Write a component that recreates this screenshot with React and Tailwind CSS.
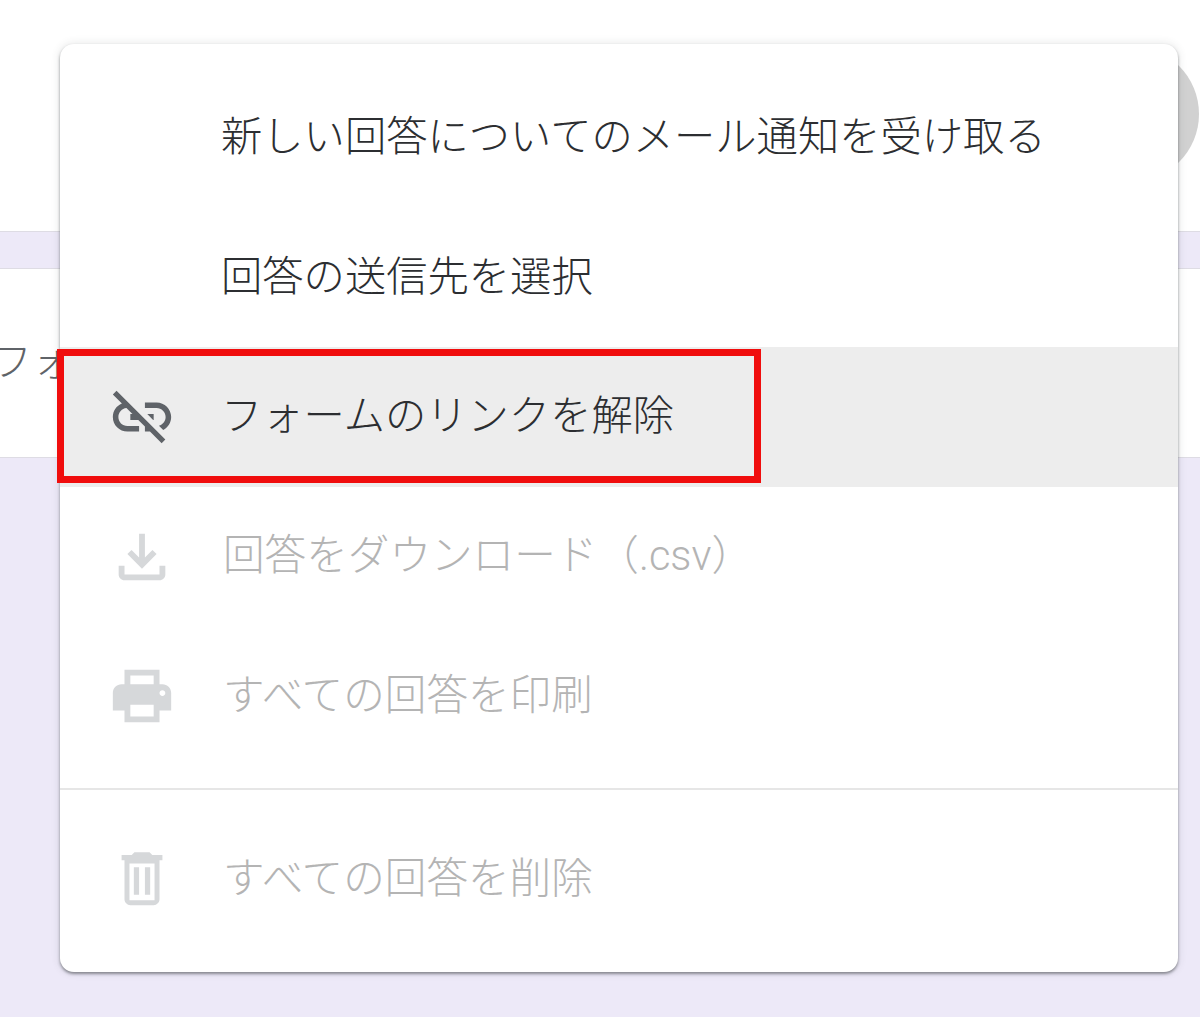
const items = [
  { label: "新しい回答についてのメール通知を受け取る" },
  { label: "回答の送信先を選択" },
  {
    label: "フォームのリンクを解除",
    active: true,
    icon: "M17 7h-4v1.9h4c1.71 0 3.1 1.39 3.1 3.1 0 1.43-.97 2.63-2.29 2.98l1.46 1.46C20.88 15.61 22 13.95 22 12c0-2.76-2.24-5-5-5zm-1 4h-2.19l2 2H16zM2 4.27l3.11 3.11C3.29 8.12 2 9.91 2 12c0 2.76 2.24 5 5 5h4v-1.9H7c-1.71 0-3.1-1.39-3.1-3.1 0-1.59 1.21-2.9 2.76-3.07L8.73 11H8v2h2.73L13 15.27V17h1.73l4.01 4L20 19.73 3.27 3 2 4.27z",
  },
  {
    label: "回答をダウンロード（.csv）",
    disabled: true,
    icon: "M18 15v3H6v-3H4v3c0 1.1.9 2 2 2h12c1.1 0 2-.9 2-2v-3h-2zm-1-4l-1.41-1.41L13 12.17V4h-2v8.17L8.41 9.59 7 11l5 5 5-5z",
  },
  {
    label: "すべての回答を印刷",
    disabled: true,
    icon: "M19 8h-1V3H6v5H5c-1.66 0-3 1.34-3 3v6h4v4h12v-4h4v-6c0-1.66-1.34-3-3-3zM8 5h8v3H8V5zm8 14H8v-4h8v4zm3-7c-.55 0-1-.45-1-1s.45-1 1-1 1 .45 1 1-.45 1-1 1z",
  },
];

const trash =
  "M9.4 3.2h5.2l.9.9H19v1.8H5V4.100h3.500zM6 5.900h12v13.400c0 1.100-.9 2-2 2H8c-1.100 0-2-.9-2-2zM7.700 7v12.600h8.600V7zM9.200 8.300h1.800v9.400H9.200zM13 8.300h1.800v9.400H13z";

function Icon({ d, disabled }) {
  return (
    <svg
      viewBox="0 0 24 24"
      className={`w-[70px] h-[70px] shrink-0 ${disabled ? "text-[#d6d8da]" : "text-[#5f6368]"}`}
      fill="currentColor"
      fillRule="evenodd"
    >
      <path d={d} />
    </svg>
  );
}

function Row({ label, icon, active, disabled, last }) {
  return (
    <div className={`flex items-center h-[139.6px] pl-[47px] ${active ? "bg-[#ededed]" : ""}`}>
      <div className="w-[70px] h-[70px] shrink-0">{icon && <Icon d={icon} disabled={disabled} />}</div>
      <span
        className={`leading-[56px] whitespace-nowrap ${last ? "mt-[3px]" : "mb-[1px]"} ${
          disabled ? "ml-[46px] text-[41.6px] text-[#b4b4b4]" : "ml-[44px] text-[41.3px] text-[#2c2e31]"
        }`}
      >
        {label}
      </span>
    </div>
  );
}

export default function App() {
  return (
    <div
      className="relative h-[1017px] w-[1200px] overflow-hidden bg-[#ede9f8] font-light"
      style={{ fontFamily: 'Roboto, "Noto Sans CJK JP", sans-serif' }}
    >
      <div className="relative h-[232px] bg-white border-b border-[#dedce4]">
        <div className="absolute left-[1063px] top-[46px] w-[136px] h-[136px] rounded-full bg-[#d1d1d1]" />
      </div>
      <div className="mt-[36px] h-[190px] bg-white border-y border-[#dedce4] pt-[65px] text-[41px] leading-[56px] text-[#5f6368] whitespace-nowrap -ml-[9px]">
        フォーム
      </div>

      <div className="absolute left-[60px] top-[44px] w-[1118px] h-[928px] bg-white rounded-[14px] pt-[24px] shadow-[0_2px_3px_rgba(60,64,67,0.55),0_0_10px_rgba(60,64,67,0.14)]">
        {items.map((it) => (
          <Row key={it.label} {...it} />
        ))}
        <div className="mt-[22px] h-[2px] bg-[#e6e6e6]" />
        <div className="mt-[18px]">
          <Row label="すべての回答を削除" icon={trash} disabled last />
        </div>
      </div>

      <div className="absolute left-[57px] top-[349px] w-[704px] h-[134px] border-[7px] border-[#f00d0d]" />
    </div>
  );
}
